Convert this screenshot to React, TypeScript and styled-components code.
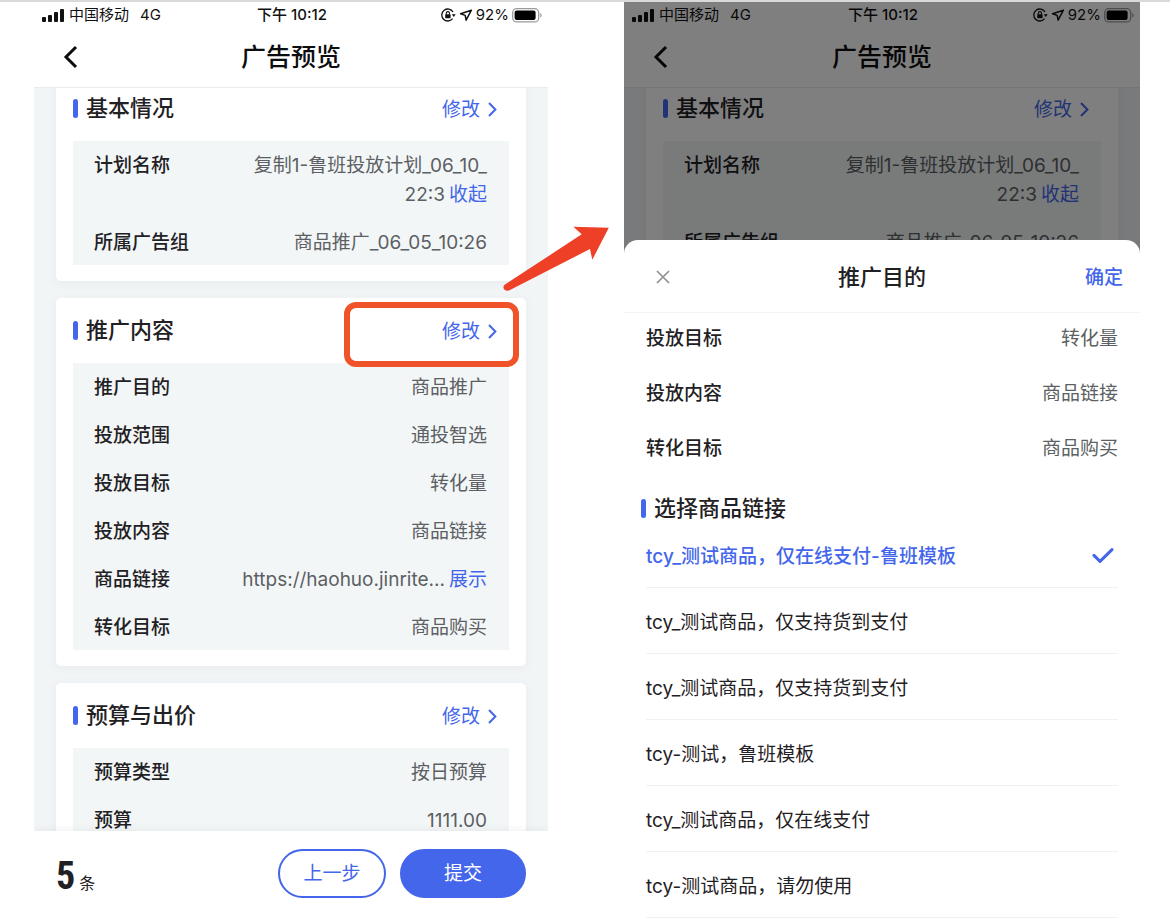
import React from "react";
import styled, { createGlobalStyle, css } from "styled-components";

const BLUE = "#4466ea";

const GlobalStyle = createGlobalStyle`
  *, *::before, *::after { box-sizing: border-box; }
  body {
    margin: 0;
    background: #fff;
    color: #1f2124;
    font-family: Inter, "Noto Sans CJK SC", sans-serif;
    font-size: 19px;
    line-height: 29px;
  }
  h1, h2, dl, dt, dd, p, ul { margin: 0; padding: 0; font-weight: 500; }
  button { padding: 0; border: 0; background: none; font: inherit; color: inherit; cursor: pointer; }
`;

const Page = styled.main`
  position: relative;
  display: grid;
  grid-template-columns: 514fr 516fr;
  column-gap: 76px;
  height: 100vh;
  padding: 0 30px 0 34px;
  border-top: 2px solid #d9d9d9;
`;

const Screen = styled.section`
  position: relative;
  display: flex;
  flex-direction: column;
  min-width: 0;
  min-height: 0;
  overflow: hidden;
`;

const Backdrop = styled.div`
  display: flex;
  flex: 1;
  flex-direction: column;
  min-height: 0;
`;

const Shade = styled.div`
  position: absolute;
  inset: 0;
  background: rgba(0, 0, 0, 0.5);
`;

const StatusBar = styled.div`
  display: grid;
  flex: none;
  grid-template-columns: 1fr auto 1fr;
  align-items: center;
  height: 26px;
  padding: 0 6px 0 8px;
  font-size: 15px;
  line-height: 20px;
  color: #111;
`;

const StatusGroup = styled.div<{ $end?: boolean }>`
  display: flex;
  align-items: center;
  justify-content: ${(p) => (p.$end ? "flex-end" : "flex-start")};
  gap: ${(p) => (p.$end ? "3px" : "5px")};
`;

const Network = styled.span`
  margin-left: 6px;
`;

const Clock = styled.span`
  font-weight: 500;
`;

const NavBar = styled.header`
  display: grid;
  flex: none;
  grid-template-columns: 1fr auto 1fr;
  align-items: center;
  height: 60px;
  padding: 0 28px 2px;
  border-bottom: 1px solid #e9ecef;
`;

const BackButton = styled.button`
  display: flex;
  justify-self: start;
`;

const NavTitle = styled.h1`
  font-size: 25px;
  line-height: 36px;
  color: #0c0d0e;
`;

const Scroller = styled.div`
  flex: 1;
  min-height: 0;
  overflow: hidden;
  background: #f2f5f6;
`;

const CardList = styled.div`
  display: flex;
  flex-direction: column;
  gap: 17px;
  margin-top: -12px;
  padding: 0 22px;
`;

const Card = styled.section`
  padding: 0 17px 16px;
  border-radius: 5px;
  background: #fff;
  box-shadow: 0 2px 10px rgba(60, 80, 130, 0.06);
`;

const CardHeader = styled.div`
  position: relative;
  display: flex;
  align-items: center;
  justify-content: space-between;
  height: 65px;
  padding-right: 12px;
`;

const SectionTitle = styled.h2`
  display: flex;
  align-items: center;
  gap: 8px;
  font-size: 22px;
  line-height: 27px;

  &::before {
    content: "";
    width: 5px;
    height: 19px;
    border-radius: 3px;
    background: ${BLUE};
  }
`;

const EditButton = styled.button`
  display: flex;
  align-items: center;
  gap: 8px;
  padding-top: 2px;
  color: ${BLUE};
`;

const Highlight = styled.span`
  position: absolute;
  top: 4px;
  right: -10px;
  width: 175px;
  height: 65px;
  border: 6px solid #f0532a;
  border-radius: 12px;
  pointer-events: none;
`;

const Details = styled.dl`
  display: flex;
  flex-direction: column;
  gap: 19px;
  padding: 10px 22px 8px 21px;
  background: #f3f6f7;
`;

const pair = css`
  display: flex;
  justify-content: space-between;

  dd {
    color: #5c5f63;
    font-weight: 400;
    text-align: right;
    white-space: nowrap;
  }
`;

const DetailRow = styled.div`
  ${pair}
`;

const ToggleButton = styled.button`
  margin-left: 4px;
  color: ${BLUE};
`;

const Footer = styled.footer`
  display: flex;
  flex: none;
  align-items: center;
  gap: 14px;
  height: 87px;
  padding: 0 22px 3px;
  background: #fff;
  box-shadow: 0 -2px 8px rgba(0, 0, 0, 0.05);
`;

const Count = styled.p`
  display: flex;
  flex: 1;
  align-items: baseline;
  gap: 4px;
  padding-top: 6px;
  font-size: 16px;
  font-weight: 400;
`;

const CountNumber = styled.strong`
  font-family: "Liberation Sans Narrow", "Roboto Condensed", Roboto, sans-serif;
  font-size: 38px;
  line-height: 44px;
`;

const PillButton = styled.button<{ $primary?: boolean }>`
  width: ${(p) => (p.$primary ? "126px" : "108px")};
  height: 49px;
  border: 2px solid ${BLUE};
  border-radius: 25px;
  background: ${(p) => (p.$primary ? BLUE : "#fff")};
  color: ${(p) => (p.$primary ? "#fff" : BLUE)};
`;

const Sheet = styled.section`
  position: absolute;
  inset: 238px 0 0;
  overflow: hidden;
  border-radius: 14px 14px 0 0;
  background: #fff;
`;

const SheetHeader = styled.header`
  display: grid;
  grid-template-columns: 1fr auto 1fr;
  align-items: center;
  height: 73px;
  padding: 2px 17px 0 32px;
  border-bottom: 1px solid #f2f4f6;
`;

const SheetTitle = styled.h2`
  margin-left: -15px;
  font-size: 22px;
  line-height: 28px;
`;

const CloseButton = styled.button`
  display: flex;
  justify-self: start;
`;

const ConfirmButton = styled.button`
  justify-self: end;
  color: ${BLUE};
  font-weight: 500;
`;

const SheetDetails = styled.dl`
  display: flex;
  flex-direction: column;
  gap: 26px;
  padding: 11px 22px 32px;
`;

const SheetHeading = styled.div`
  padding-left: 17px;
`;

const Options = styled.ul`
  padding: 0 22px;
  list-style: none;
`;

const Option = styled.label<{ $selected?: boolean }>`
  display: flex;
  align-items: center;
  justify-content: space-between;
  height: 66px;
  padding: 3px 4px 0 0;
  border-bottom: 1px solid #eff1f3;
  color: ${(p) => (p.$selected ? BLUE : "#1f2124")};
  font-weight: ${(p) => (p.$selected ? 500 : 400)};
  cursor: pointer;
`;

const HiddenRadio = styled.input`
  position: absolute;
  width: 1px;
  height: 1px;
  margin: 0;
  opacity: 0;
`;

const Arrow = styled.svg`
  position: absolute;
  top: 222px;
  left: calc(50% - 85px);
  pointer-events: none;
`;

function SignalIcon() {
  return (
    <svg width="22" height="13" viewBox="0 0 22 13" fill="#111">
      <rect x="0" y="8" width="4" height="5" rx="1" />
      <rect x="6" y="6" width="4" height="7" rx="1" />
      <rect x="12" y="3" width="4" height="10" rx="1" />
      <rect x="18" y="0" width="4" height="13" rx="1" />
    </svg>
  );
}

function RotationLockIcon() {
  return (
    <svg width="15" height="14" viewBox="0 0 15 14" fill="none" stroke="#111">
      <path d="M12 4A6 6 0 1 0 11.6 10.6" strokeWidth="1.3" />
      <path d="M10.8 6.2h3.9l-1.9 2.7z" fill="#111" stroke="none" />
      <rect x="4.2" y="6.2" width="5.4" height="4" rx=".6" fill="#111" stroke="none" />
      <path d="M5.3 6.5V5.2a1.6 1.6 0 0 1 3.2 0v1.3" strokeWidth="1.1" />
    </svg>
  );
}

function LocationIcon() {
  return (
    <svg width="14" height="14" viewBox="0 0 14 14" fill="none" stroke="#111" strokeWidth="1.5" strokeLinejoin="round">
      <path d="M12.4 2.2L1.6 5.8l4.6 1.6.9 4.8z" />
    </svg>
  );
}

function BatteryIcon() {
  return (
    <svg width="30" height="15" viewBox="0 0 30 15" fill="none">
      <rect x=".7" y=".7" width="26" height="13.2" rx="4" stroke="#9a9b9c" strokeWidth="1.3" />
      <rect x="2.6" y="2.6" width="21" height="9.4" rx="2" fill="#000" />
      <path d="M28.3 5v4.6c1.8-.7 1.8-3.9 0-4.6z" fill="#9a9b9c" />
    </svg>
  );
}

function ChevronLeft() {
  return (
    <svg width="17" height="24" viewBox="0 0 17 24" fill="none" stroke="#0c0d0e" strokeWidth="3">
      <path d="M14 2L4 12l10 10" />
    </svg>
  );
}

function ChevronRight() {
  return (
    <svg width="9" height="15" viewBox="0 0 9 15" fill="none" stroke={BLUE} strokeWidth="2">
      <path d="M1 1l6.4 6.5L1 14" />
    </svg>
  );
}

function CloseIcon() {
  return (
    <svg width="14" height="14" viewBox="0 0 14 14" fill="none" stroke="#8f9194" strokeWidth="1.7">
      <path d="M1 1l12 12M13 1L1 13" />
    </svg>
  );
}

function CheckIcon() {
  return (
    <svg width="22" height="18" viewBox="0 0 22 18" fill="none" stroke={BLUE} strokeWidth="3" strokeLinecap="round" strokeLinejoin="round">
      <path d="M2 8.4l6 6L20 2.6" />
    </svg>
  );
}

type Detail = { label: string; value: React.ReactNode };
type CardData = { title: string; details: Detail[]; highlighted?: boolean };

const cards: CardData[] = [
  {
    title: "基本情况",
    details: [
      {
        label: "计划名称",
        value: (
          <>
            复制1-鲁班投放计划_06_10_
            <br />
            22:3
            <ToggleButton type="button">收起</ToggleButton>
          </>
        ),
      },
      { label: "所属广告组", value: "商品推广_06_05_10:26" },
    ],
  },
  {
    title: "推广内容",
    highlighted: true,
    details: [
      { label: "推广目的", value: "商品推广" },
      { label: "投放范围", value: "通投智选" },
      { label: "投放目标", value: "转化量" },
      { label: "投放内容", value: "商品链接" },
      {
        label: "商品链接",
        value: (
          <>
            https://haohuo.jinrite...
            <ToggleButton type="button">展示</ToggleButton>
          </>
        ),
      },
      { label: "转化目标", value: "商品购买" },
    ],
  },
  {
    title: "预算与出价",
    details: [
      { label: "预算类型", value: "按日预算" },
      { label: "预算", value: "1111.00" },
    ],
  },
];

const sheetDetails: Detail[] = [
  { label: "投放目标", value: "转化量" },
  { label: "投放内容", value: "商品链接" },
  { label: "转化目标", value: "商品购买" },
];

const products = [
  "tcy_测试商品，仅在线支付-鲁班模板",
  "tcy_测试商品，仅支持货到支付",
  "tcy_测试商品，仅支持货到支付",
  "tcy-测试，鲁班模板",
  "tcy_测试商品，仅在线支付",
  "tcy-测试商品，请勿使用",
];

function PreviewTop() {
  return (
    <>
      <StatusBar>
        <StatusGroup>
          <SignalIcon />
          <span>中国移动</span>
          <Network>4G</Network>
        </StatusGroup>
        <Clock>下午 10:12</Clock>
        <StatusGroup $end>
          <RotationLockIcon />
          <LocationIcon />
          <span>92%</span>
          <BatteryIcon />
        </StatusGroup>
      </StatusBar>
      <NavBar>
        <BackButton type="button" aria-label="返回">
          <ChevronLeft />
        </BackButton>
        <NavTitle>广告预览</NavTitle>
      </NavBar>
    </>
  );
}

function Cards({ items }: { items: CardData[] }) {
  return (
    <Scroller>
      <CardList>
        {items.map((card) => (
          <Card key={card.title}>
            <CardHeader>
              <SectionTitle>{card.title}</SectionTitle>
              <EditButton type="button">
                修改
                <ChevronRight />
              </EditButton>
              {card.highlighted && <Highlight />}
            </CardHeader>
            <Details>
              {card.details.map((d) => (
                <DetailRow key={d.label}>
                  <dt>{d.label}</dt>
                  <dd>{d.value}</dd>
                </DetailRow>
              ))}
            </Details>
          </Card>
        ))}
      </CardList>
    </Scroller>
  );
}

export default function App() {
  const [selected, setSelected] = React.useState(0);
  return (
    <>
      <GlobalStyle />
      <Page>
        <Screen>
          <PreviewTop />
          <Cards items={cards} />
          <Footer>
            <Count>
              <CountNumber>5</CountNumber>条
            </Count>
            <PillButton type="button">上一步</PillButton>
            <PillButton type="button" $primary>
              提交
            </PillButton>
          </Footer>
        </Screen>
        <Screen>
          <Backdrop inert>
            <PreviewTop />
            <Cards items={cards.slice(0, 1)} />
          </Backdrop>
          <Shade />
          <Sheet role="dialog" aria-label="推广目的">
            <SheetHeader>
              <CloseButton type="button" aria-label="关闭">
                <CloseIcon />
              </CloseButton>
              <SheetTitle>推广目的</SheetTitle>
              <ConfirmButton type="button">确定</ConfirmButton>
            </SheetHeader>
            <SheetDetails>
              {sheetDetails.map((d) => (
                <DetailRow key={d.label}>
                  <dt>{d.label}</dt>
                  <dd>{d.value}</dd>
                </DetailRow>
              ))}
            </SheetDetails>
            <SheetHeading>
              <SectionTitle>选择商品链接</SectionTitle>
            </SheetHeading>
            <Options>
              {products.map((name, i) => (
                <li key={i}>
                  <Option $selected={i === selected}>
                    <HiddenRadio type="radio" name="product" checked={i === selected} onChange={() => setSelected(i)} />
                    {name}
                    {i === selected && <CheckIcon />}
                  </Option>
                </li>
              ))}
            </Options>
          </Sheet>
        </Screen>
        <Arrow width="110" height="72" viewBox="0 0 110 72" fill="#ee4026" aria-hidden="true">
          <path d="M4.6 60.8L81.7 10.3 73.3 2.7 108.8 3.7 92.3 35.7 90 25 10 66C5 68.400 1.500 63.500 4.600 60.800z" />
        </Arrow>
      </Page>
    </>
  );
}
